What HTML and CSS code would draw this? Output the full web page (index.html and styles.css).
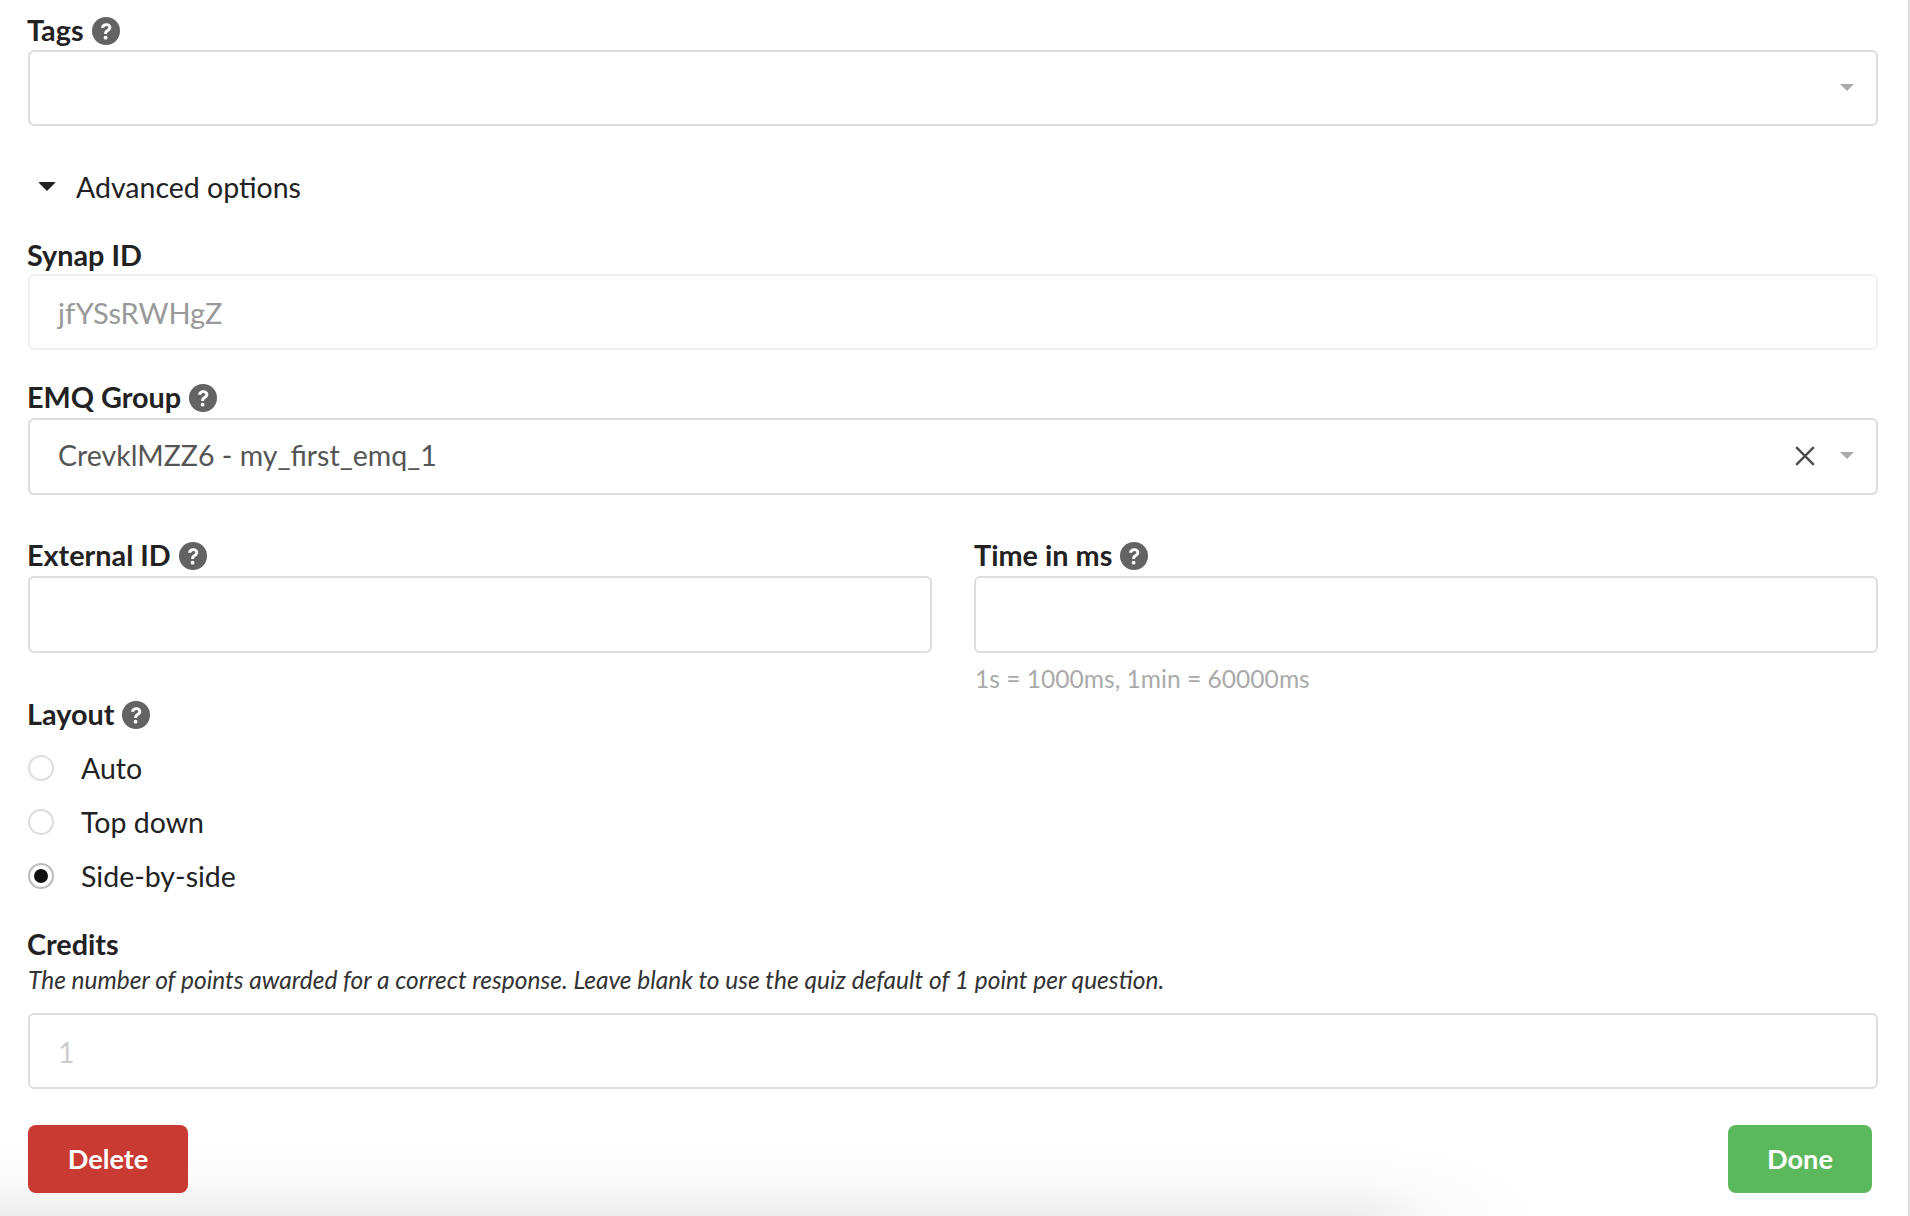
FILE: index.html
```html
<!DOCTYPE html>
<html lang="en">
<head>
<meta charset="utf-8">
<title>Question options</title>
<link rel="stylesheet" href="styles.css">
</head>
<body>
<svg class="defs" width="0" height="0" aria-hidden="true">
  <symbol id="help" viewBox="0 0 28 28">
    <circle cx="14" cy="14" r="14" fill="#636363"/>
    <path d="M9 10.8c.3-3 2.400-4.600 5.200-4.600 2.900 0 5.100 1.700 5.100 4.300 0 2-1.100 3-2.500 3.900-1.300.8-1.800 1.300-1.800 2.700h-2.900c0-2.300.8-3.400 2.500-4.500 1.100-.7 1.700-1.200 1.700-2.100 0-1-.8-1.600-1.900-1.600-1.200 0-2 .7-2.200 1.900z" fill="#fff"/>
    <circle cx="13.600" cy="20.700" r="1.900" fill="#fff"/>
  </symbol>
</svg>
<main class="form">
  <div class="field">
    <div class="label">Tags <svg class="help"><use href="#help"/></svg></div>
    <div class="control select"><span class="caret"></span></div>
  </div>
  <div class="advanced"><span class="adv-caret"></span>Advanced options</div>
  <div class="field synap">
    <div class="label">Synap ID</div>
    <div class="control disabled">jfYSsRWHgZ</div>
  </div>
  <div class="field emq">
    <div class="label">EMQ Group <svg class="help"><use href="#help"/></svg></div>
    <div class="control tall select value">CrevklMZZ6 - my_first_emq_1
      <svg class="clear" viewBox="0 0 20 20"><path d="M2 2l16 16M18 2L2 18" stroke="#4d4d4d" stroke-width="2.200" fill="none"/></svg>
      <span class="caret"></span>
    </div>
  </div>
  <div class="columns">
    <div class="field">
      <div class="label">External ID <svg class="help"><use href="#help"/></svg></div>
      <div class="control tall"></div>
    </div>
    <div class="field">
      <div class="label">Time in ms <svg class="help"><use href="#help"/></svg></div>
      <div class="control tall"></div>
      <div class="hint">1s = 1000ms, 1min = 60000ms</div>
    </div>
  </div>
  <div class="field layout">
    <div class="label">Layout <svg class="help"><use href="#help"/></svg></div>
    <div class="radios">
      <div class="radio"><span class="dot"></span>Auto</div>
      <div class="radio"><span class="dot"></span>Top down</div>
      <div class="radio"><span class="dot on"></span>Side-by-side</div>
    </div>
  </div>
  <div class="field credits">
    <div class="label">Credits</div>
    <div class="desc">The number of points awarded for a correct response. Leave blank to use the quiz default of 1 point per question.</div>
    <div class="control placeholder">1</div>
  </div>
  <div class="actions">
    <button class="btn delete">Delete</button>
    <button class="btn done">Done</button>
  </div>
</main>
</body>
</html>
```
FILE: styles.css
```css
html, body { margin: 0; padding: 0; height: 1216px; overflow: hidden; background: #fff; }
body {
  font-family: Lato, "Open Sans", sans-serif;
  color: #222;
  position: relative;
  border-right: 2px solid #ddd;
  box-sizing: border-box;
  width: 1910px;
  background:
    linear-gradient(to top, #eee, #fafafa 45%, #fff) 0 100% / 1350px 75px no-repeat,
    radial-gradient(ellipse 190px 75px at 0 100%, #eee, #fafafa 45%, #fff) 1350px 100% / 190px 75px no-repeat,
    #fff;
}
.defs { position: absolute; }
.form { padding: 12px 30px 0 28px; }
.label { box-sizing: border-box; font-size: 28.8px; line-height: 36px; font-weight: 700; height: 38px; padding-bottom: 3px; margin-left: -1px; display: flex; align-items: center; gap: 8px; color: #222; }
.synap .label { padding-bottom: 1px; }
.emq .label, .columns .label { padding-bottom: 5px; }
.columns .field + .field .label { margin-left: 0; }
.help { width: 28px; height: 28px; flex: none; margin-top: 2px; }
.control {
  box-sizing: border-box;
  height: 76px;
  border: 2px solid #ddd;
  border-radius: 6px;
  display: flex;
  align-items: center;
  padding: 0 28px;
  font-size: 28.5px;
  color: #555;
  position: relative;
}
.tall { height: 77px; padding-bottom: 3px; }
.caret { position: absolute; right: 22px; top: 32px; width: 0; height: 0; border-left: 7px solid transparent; border-right: 7px solid transparent; border-top: 7px solid #aaa; }
.clear { position: absolute; right: 60px; top: 25px; width: 22px; height: 22px; }
.advanced { display: flex; align-items: center; font-size: 28.5px; line-height: 36px; margin-top: 43px; padding-left: 10px; color: #222; }
.adv-caret { width: 0; height: 0; border-left: 9px solid transparent; border-right: 9px solid transparent; border-top: 9px solid #222; margin-right: 20px; margin-top: -2px; border-radius: 2px; }
.synap { margin-top: 31px; }
.disabled { border-color: #f0f0f0; color: #999; font-size: 29px; }
.emq { margin-top: 30px; }
.columns { display: grid; grid-template-columns: 904px 904px; column-gap: 42px; margin-top: 43px; }
.hint { font-size: 24.6px; line-height: 32px; color: #aaa; margin-top: 10px; margin-left: 1px; }
.layout { margin-top: 1px; }
.radios { margin-top: 7px; }
.radio { display: flex; align-items: center; height: 54px; font-size: 28.5px; color: #222; }
.dot { box-sizing: border-box; width: 26px; height: 26px; border: 2px solid #ddd; border-radius: 50%; margin-right: 27px; flex: none; display: flex; align-items: center; justify-content: center; }
.dot.on { border-color: #bbb; }
.dot.on::after { content: ""; width: 14px; height: 14px; border-radius: 50%; background: #111; }
.credits { margin-top: 23px; }
.desc { font-size: 24.5px; line-height: 32px; font-style: italic; color: #333; margin-bottom: 17px; margin-top: 0; }
.placeholder { color: #ccc; padding-top: 2px; }
.actions { display: flex; justify-content: space-between; margin-top: 36px; padding-right: 6px; }
.btn { height: 68px; border: 0; border-radius: 8px; padding: 0 0 2px; color: #fff; font: 700 27.2px Lato, sans-serif; }
.delete { width: 160px; background: #c93a32; }
.done { width: 144px; background: #5cb85c; }
```
